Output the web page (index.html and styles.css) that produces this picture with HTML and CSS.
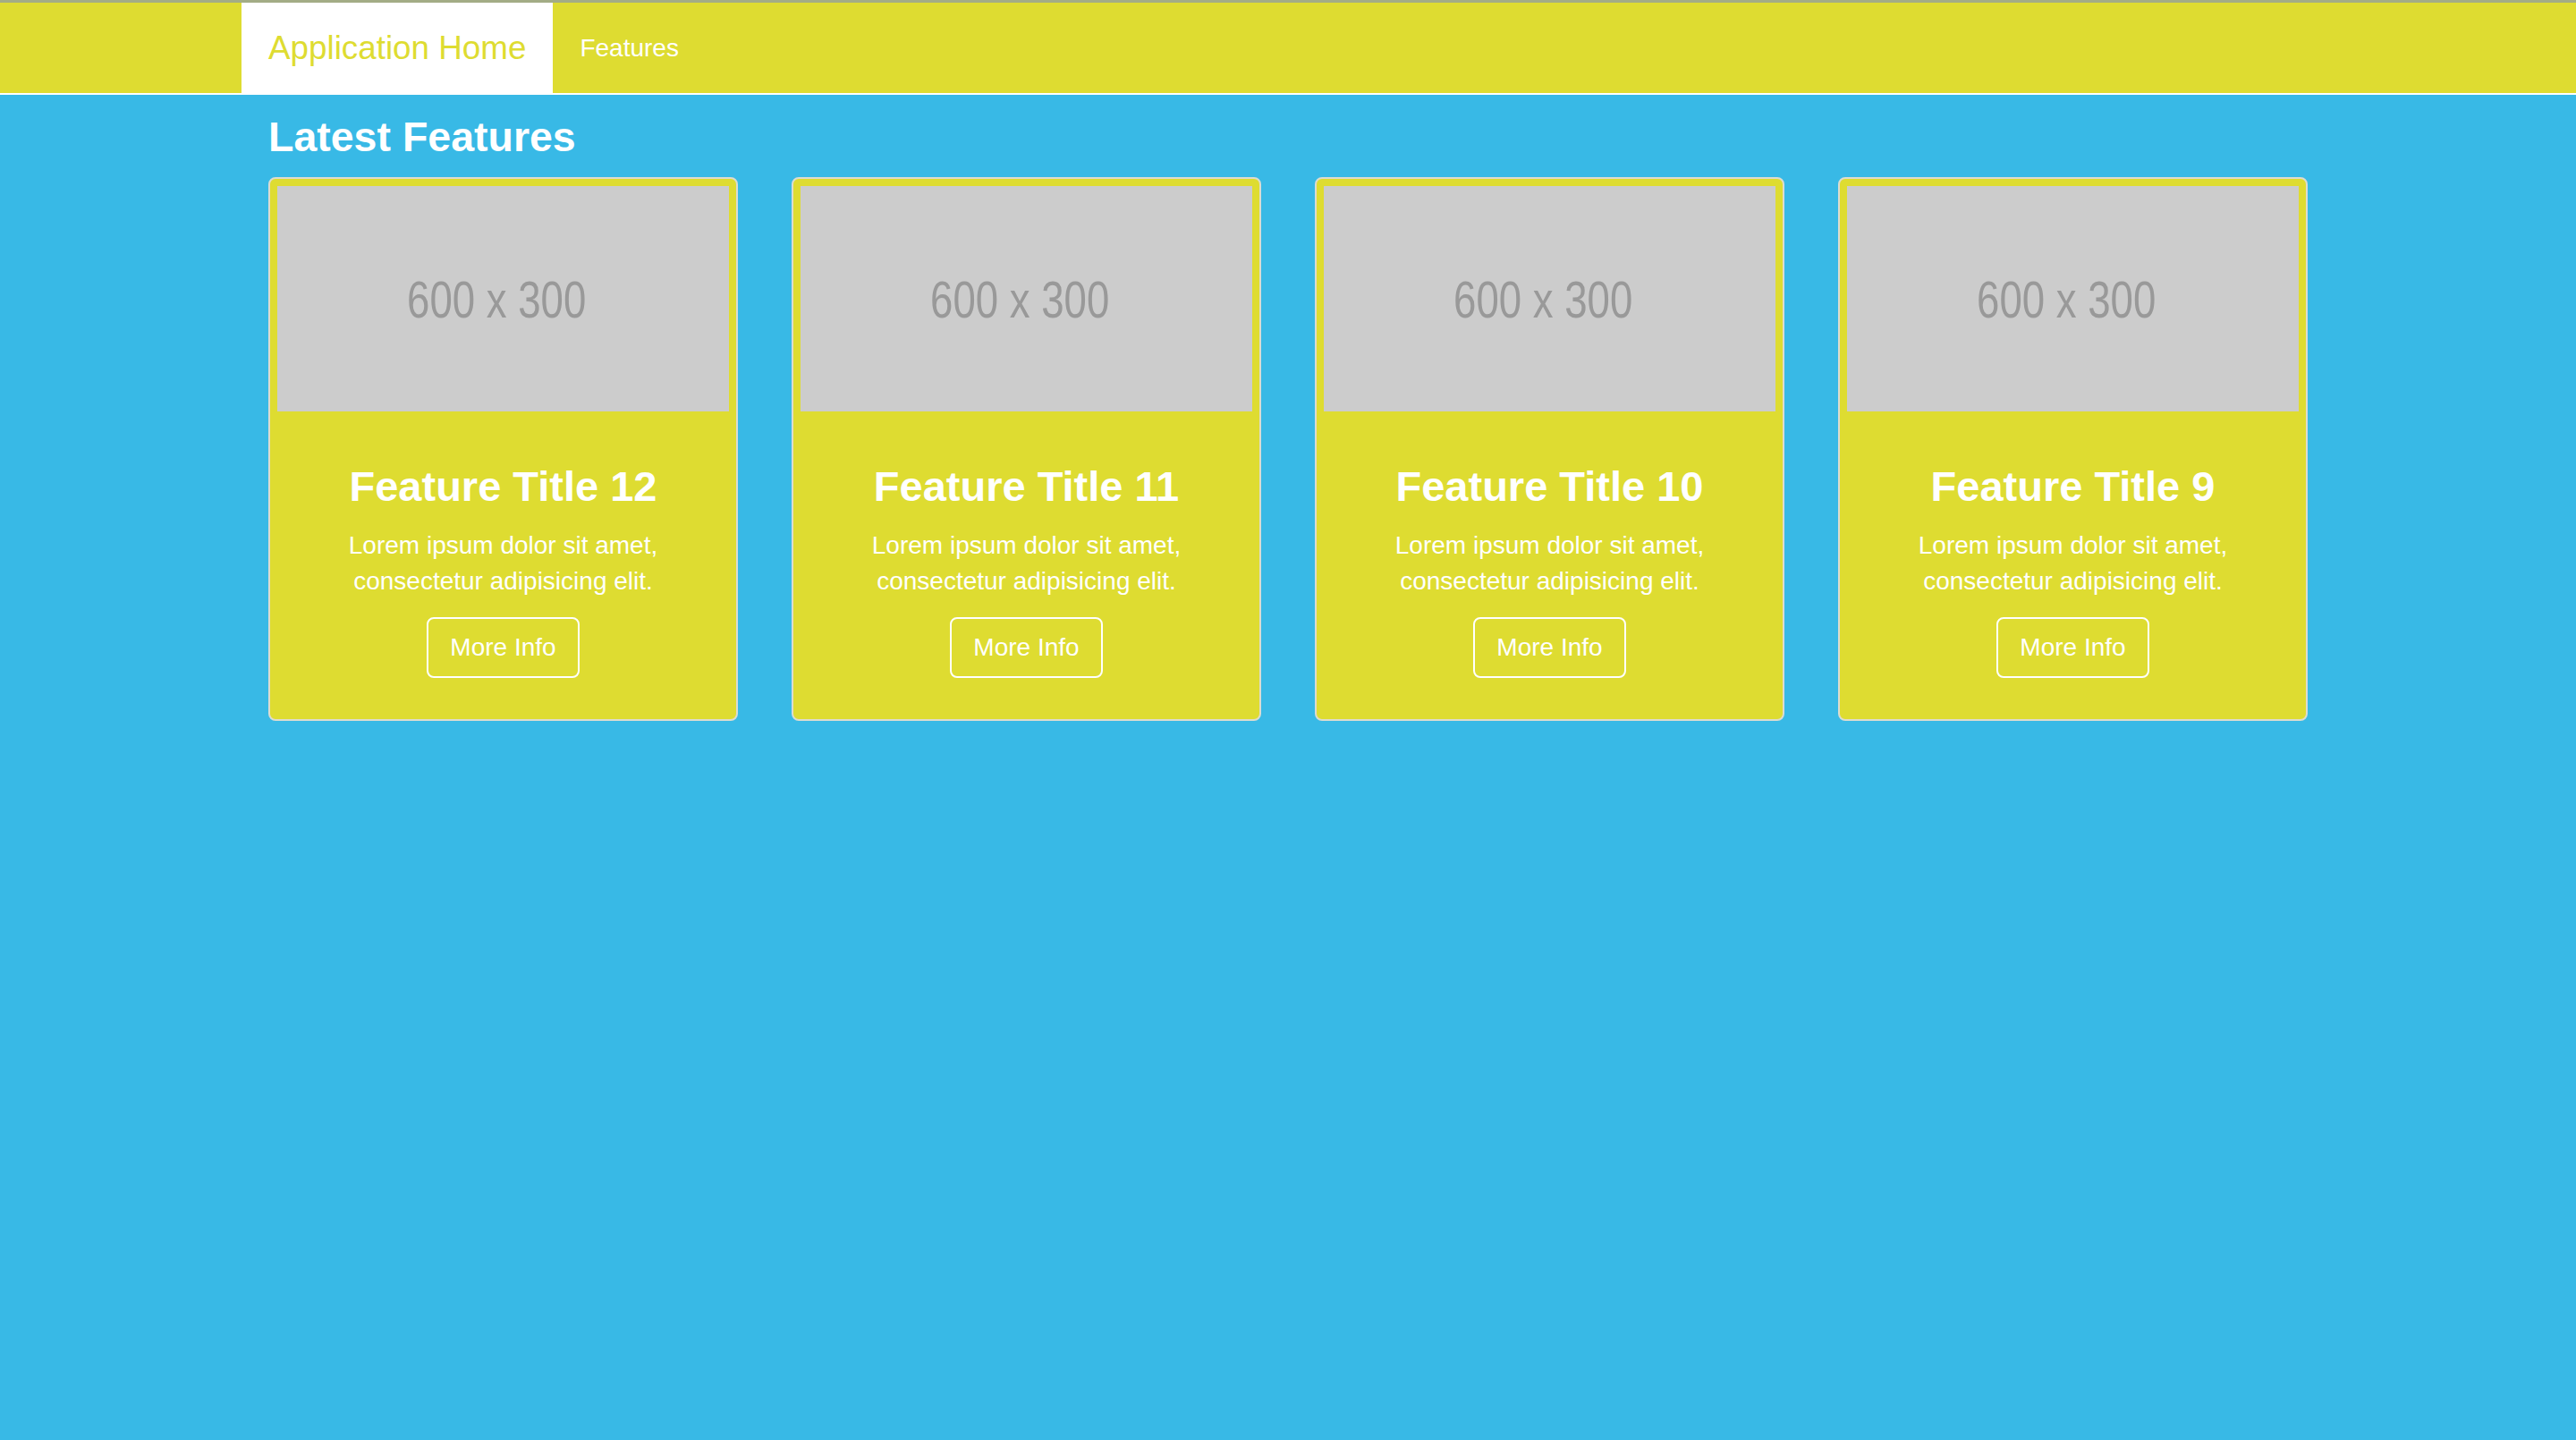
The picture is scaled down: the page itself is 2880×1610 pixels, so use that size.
FILE: index.html
```html
<!DOCTYPE html>
<html lang="en">
<head>
<meta charset="utf-8">
<title>Application Home</title>
<link rel="stylesheet" href="styles.css">
</head>
<body>
<nav class="navbar">
  <div class="container nav-inner">
    <a class="brand" href="#">Application Home</a>
    <a class="nav-link" href="#">Features</a>
  </div>
</nav>
<main class="container">
  <h3 class="page-title">Latest Features</h3>
  <div class="cards">
    <div class="card">
      <div class="placeholder"><span>600 x 300</span></div>
      <div class="caption">
        <h3 class="card-title">Feature Title 12</h3>
        <p class="card-text">Lorem ipsum dolor sit amet, consectetur adipisicing elit.</p>
        <p class="card-action"><a class="btn" href="#">More Info</a></p>
      </div>
    </div>
    <div class="card">
      <div class="placeholder"><span>600 x 300</span></div>
      <div class="caption">
        <h3 class="card-title">Feature Title 11</h3>
        <p class="card-text">Lorem ipsum dolor sit amet, consectetur adipisicing elit.</p>
        <p class="card-action"><a class="btn" href="#">More Info</a></p>
      </div>
    </div>
    <div class="card">
      <div class="placeholder"><span>600 x 300</span></div>
      <div class="caption">
        <h3 class="card-title">Feature Title 10</h3>
        <p class="card-text">Lorem ipsum dolor sit amet, consectetur adipisicing elit.</p>
        <p class="card-action"><a class="btn" href="#">More Info</a></p>
      </div>
    </div>
    <div class="card">
      <div class="placeholder"><span>600 x 300</span></div>
      <div class="caption">
        <h3 class="card-title">Feature Title 9</h3>
        <p class="card-text">Lorem ipsum dolor sit amet, consectetur adipisicing elit.</p>
        <p class="card-action"><a class="btn" href="#">More Info</a></p>
      </div>
    </div>
  </div>
</main>
</body>
</html>
```

FILE: styles.css
```css
* {
  box-sizing: border-box;
}

html, body {
  margin: 0;
  padding: 0;
}

body {
  background: #38b9e6;
  font-family: "Liberation Sans", Arial, Helvetica, sans-serif;
  font-size: 28px;
  line-height: 40px;
  color: #ffffff;
  min-height: 1610px;
}

a {
  text-decoration: none;
}

.container {
  width: 2340px;
  margin: 0 auto;
  padding: 0 30px;
}

.navbar {
  background: #dedc31;
  border-top: 3px solid #a3ac86;
  border-bottom: 2px solid #ffffff;
}

.nav-inner {
  display: flex;
  align-items: stretch;
  height: 101px;
}

.brand {
  margin-left: -30px;
  padding: 0 30px;
  display: flex;
  align-items: center;
  background: #ffffff;
  color: #dedc31;
  font-size: 36.8px;
  line-height: 40px;
}

.nav-link {
  padding: 0 30px;
  display: flex;
  align-items: center;
  color: #ffffff;
  font-size: 28px;
  line-height: 40px;
}

.page-title {
  margin: 21px 0 19px;
  font-size: 46.5px;
  line-height: 52px;
  font-weight: bold;
  color: #ffffff;
}

.cards {
  display: grid;
  grid-template-columns: repeat(4, 525px);
  column-gap: 60px;
}

.card {
  background: #dedc31;
  border: 2px solid #dcdcd0;
  border-radius: 8px;
  padding: 8px;
}

.placeholder {
  height: 252px;
  background: #cccccc;
  display: flex;
  align-items: center;
  justify-content: center;
  padding-right: 15px;
}

.placeholder span {
  display: inline-block;
  font-size: 57px;
  line-height: 60px;
  color: #999999;
  transform: scaleX(0.8);
  margin-top: 2px;
}

.caption {
  padding: 18px;
  text-align: center;
}

.card-title {
  margin: 40px 0 20px;
  font-size: 47px;
  line-height: 52px;
  font-weight: bold;
}

.card-text {
  margin: 0 0 20px;
}

.card-action {
  margin: 0 0 20px;
  height: 68px;
}

.btn {
  display: inline-block;
  padding: 12px 24px;
  border: 2px solid #ffffff;
  border-radius: 8px;
  color: #ffffff;
  font-size: 28px;
  line-height: 40px;
}
```
